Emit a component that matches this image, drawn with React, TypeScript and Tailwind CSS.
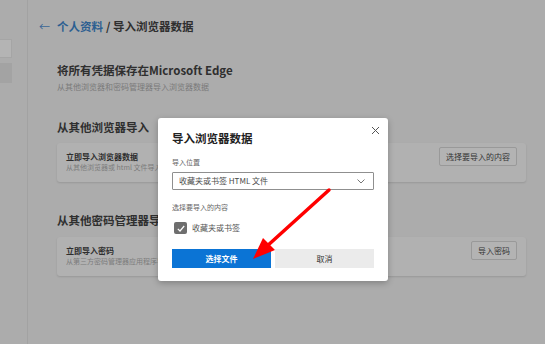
import React from "react";

function SourceCard({ title, sub, action }: { title: string; sub: string; action: string }) {
  return (
    <div className="flex h-[39px] items-start justify-between rounded-[3px] bg-[#b1b1b1] pl-[9px] pr-[9px] shadow-[0_1px_2px_rgba(0,0,0,0.12)]">
      <div className="pt-[8px]">
        <p className="h-[11px] text-[8px] font-bold leading-[11px] text-[#2e2e2e]">{title}</p>
        {/* the rest of this line is hidden behind the dialog */}
        <p className="h-[11px] w-[92px] overflow-hidden whitespace-nowrap text-[7px] leading-[11px] text-[#7c7c7c]">{sub}</p>
      </div>
      <button className="mt-[4px] h-[19px] rounded-[2px] border border-[#999] bg-[#b3b3b3] px-[6px] text-[8px] leading-[17px] text-[#333]">
        {action}
      </button>
    </div>
  );
}

export default function App() {
  return (
    <div
      className="relative flex h-[344px] w-[545px] overflow-hidden bg-[#acacac]"
      style={{ fontFamily: '"Noto Sans CJK SC", "Noto Sans", sans-serif' }}
    >
      {/* sidebar */}
      <div className="w-[28px] shrink-0 border-r border-[#a2a2a2] pt-[39px]">
        <div className="h-[19px] w-[12px] border border-l-0 border-[#a5a5a5] bg-[#b4b4b4]" />
        <div className="mt-[5px] h-[20px] w-[12px] bg-[#a3a3a3]" />
      </div>

      {/* main */}
      <div className="flex-1 pl-[11px] pr-[19px] pt-[18px]">
        <div className="flex h-[16px] items-center text-[11.5px] font-bold leading-[16px]">
          <span className="w-[18px] text-[11px] font-normal text-[#3b6796]">←</span>
          <span className="text-[#2d5f91]">个人资料</span>
          <span className="ml-[3px] text-[#2f2f2f]">/ 导入浏览器数据</span>
        </div>

        <div className="ml-[18px]">
          <h1 className="mt-[28px] h-[16px] text-[11.5px] font-bold leading-[16px] text-[#2f2f2f]">
            将所有凭据保存在Microsoft Edge
          </h1>
          <p className="mt-[3px] h-[12px] text-[8px] leading-[12px] text-[#7a7a7a]">
            从其他浏览器和密码管理器导入浏览器数据
          </p>

          <h2 className="mt-[26px] h-[16px] text-[11.5px] font-bold leading-[16px] text-[#2f2f2f]">从其他浏览器导入</h2>
          <div className="mt-[8px]">
            <SourceCard
              title="立即导入浏览器数据"
              sub="从其他浏览器或 html 文件导入收藏夹、密码、历史记录等"
              action="选择要导入的内容"
            />
          </div>

          <h2 className="mt-[30px] h-[16px] text-[11.5px] font-bold leading-[16px] text-[#2f2f2f]">从其他密码管理器导入</h2>
          <div className="mt-[9px]">
            <SourceCard title="立即导入密码" sub="从第三方密码管理器应用程序导入密码" action="导入密码" />
          </div>
        </div>
      </div>

      {/* dialog */}
      <div className="absolute left-[158px] top-[118px] w-[230px] rounded-[3px] bg-white px-[14px] pb-[13px] pt-[12px] shadow-[0_2px_6px_rgba(0,0,0,0.25)]">
        <div className="flex items-start justify-between">
          <h3 className="h-[16px] text-[11.5px] font-bold leading-[16px] text-[#222]">导入浏览器数据</h3>
          <svg className="-mr-[6px] -mt-[4px]" width="9" height="9" viewBox="0 0 9 9">
            <path d="M1 1 L8 8 M8 1 L1 8" stroke="#555" strokeWidth="1" fill="none" />
          </svg>
        </div>
        <p className="mt-[11px] h-[10px] text-[7px] leading-[10px] text-[#666]">导入位置</p>
        <div className="mt-[5px] flex h-[18px] items-center justify-between rounded-[1px] border border-[#8f8f8f] pl-[6px] pr-[8px]">
          <span className="text-[8px] text-[#4a4a4a]">收藏夹或书签 HTML 文件</span>
          <svg width="8" height="5" viewBox="0 0 8 5">
            <path d="M0.5 0.5 L4 4 L7.5 0.5" stroke="#666" strokeWidth="0.9" fill="none" />
          </svg>
        </div>
        <p className="mt-[12px] h-[10px] text-[7px] leading-[10px] text-[#666]">选择要导入的内容</p>
        <div className="mt-[10px] flex h-[12px] items-center">
          <div className="ml-[2px] flex h-[12px] w-[13px] items-center justify-center rounded-[2px] bg-[#6e6e6e]">
            <svg width="8" height="7" viewBox="0 0 8 7">
              <path d="M0.8 3.8 L3 6 L7.2 1" stroke="#fff" strokeWidth="1.2" fill="none" />
            </svg>
          </div>
          <span className="ml-[5px] text-[8px] text-[#555]">收藏夹或书签</span>
        </div>
        <div className="mt-[15px] flex gap-[4px]">
          <button className="h-[19px] flex-1 bg-[#0b74d5] text-[8px] font-bold text-white">选择文件</button>
          <button className="h-[19px] flex-1 bg-[#ebebeb] text-[8px] text-[#333]">取消</button>
        </div>
      </div>

      {/* red annotation arrow */}
      <svg className="pointer-events-none absolute left-0 top-0" width="545" height="344" viewBox="0 0 545 344">
        <line x1="329" y1="190" x2="266" y2="247" stroke="#f00" strokeWidth="3.5" strokeLinecap="round" />
        <polygon points="253,259 263,238 275,250" fill="#f00" />
      </svg>
    </div>
  );
}
